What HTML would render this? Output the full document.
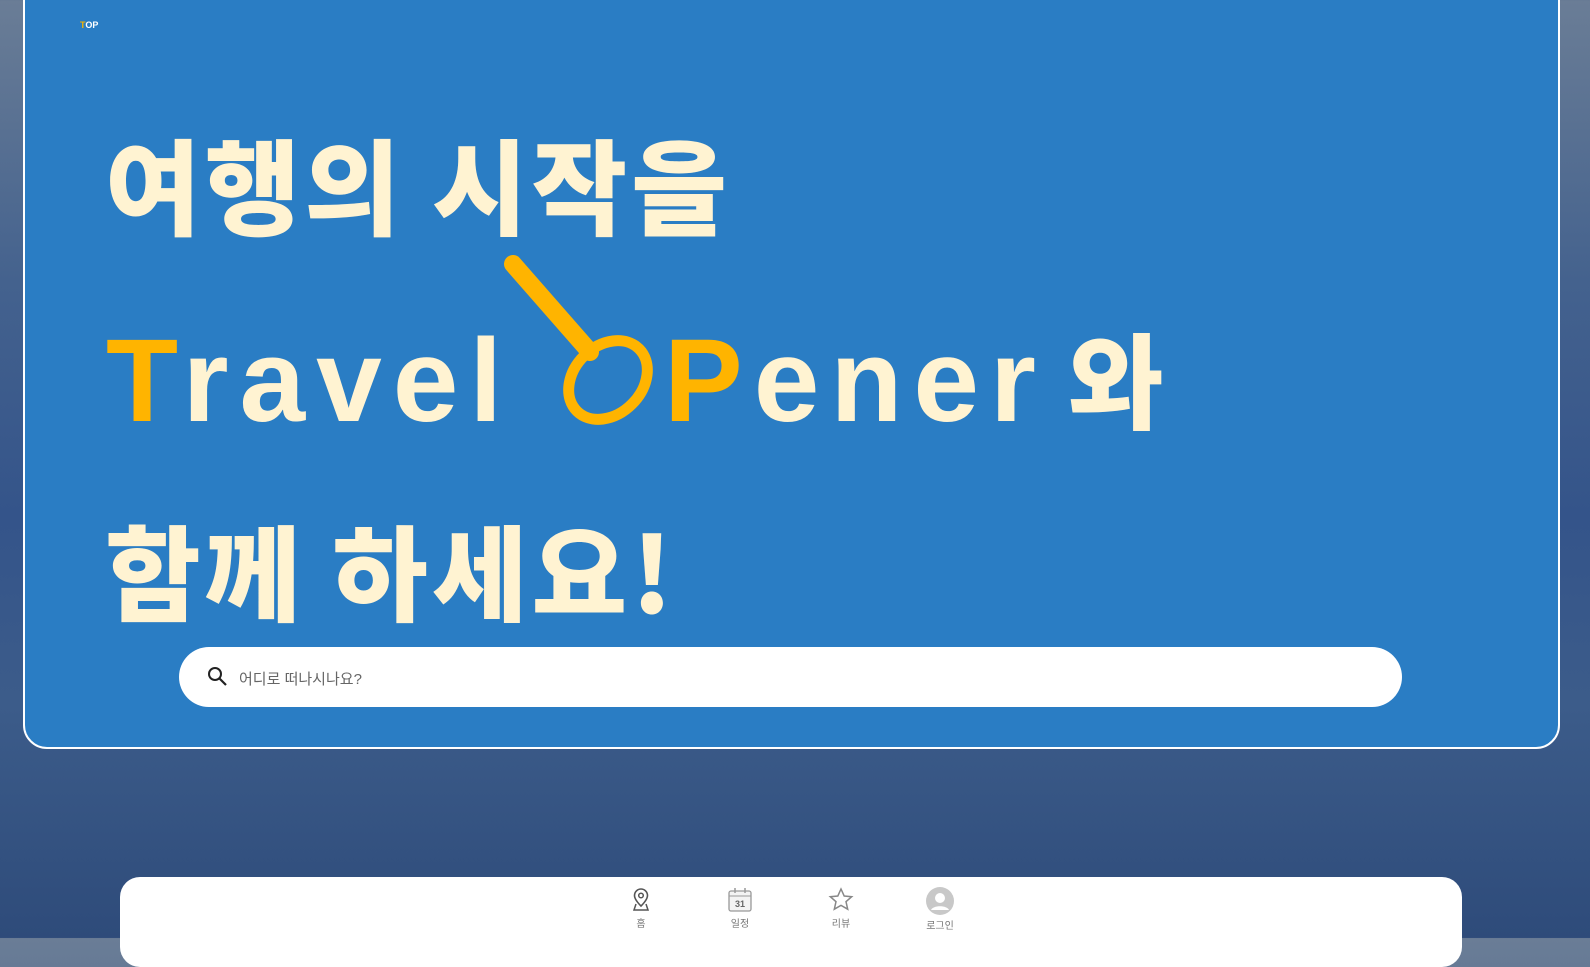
<!DOCTYPE html>
<html><head><meta charset="utf-8"><style>
*{margin:0;padding:0;box-sizing:border-box}
body{width:1590px;height:938px;overflow:hidden;position:relative;font-family:"Liberation Sans","Noto Sans CJK KR",sans-serif;
background:linear-gradient(180deg,#6a7d96 0%,#44628e 30%,#34548a 55%,#3c5c8a 75%,#2e4b7a 100%);}
.card{position:absolute;left:23px;top:-4px;width:1537px;height:753px;background:#2a7dc4;border:2px solid #fff;border-radius:0 0 24px 24px}
.top{position:absolute;left:55px;top:22px;font-size:9px;font-weight:900;color:#fff}
.top b{color:#f5b400}
.big{position:absolute;left:105px;color:#fff3d2;font-family:"Noto Sans CJK KR","Liberation Sans",sans-serif;font-weight:900;font-size:104px;line-height:1;white-space:nowrap;letter-spacing:4px}
.lat{position:absolute;color:#fff3d2;font-family:"Liberation Sans",sans-serif;font-weight:900;font-size:118px;line-height:1;white-space:nowrap;letter-spacing:11px}
.y{color:#ffb400}
.search{position:absolute;left:179px;top:647px;width:1223px;height:60px;background:#fff;border-radius:30px}
.search span{position:absolute;left:60px;top:21px;font-size:15px;color:#666}
.nav{position:absolute;left:120px;top:877px;width:1342px;height:90px;background:#fff;border-radius:20px}
.it{position:absolute;top:10px;width:60px;text-align:center;font-size:10px;color:#777}
.it svg{display:block;margin:0 auto 2px}
</style></head><body>
<div class="card">
<div class="top"><b>T</b>OP</div>
</div>
<div class="big" style="top:130px">여행의 시작을</div>
<div class="lat" style="left:106px;top:322px"><span class="y">T</span>ravel</div>
<svg style="position:absolute;left:480px;top:240px" width="200" height="200"><line x1="33" y1="24" x2="110" y2="112" stroke="#ffb400" stroke-width="18" stroke-linecap="round"/><ellipse cx="128" cy="140" rx="44" ry="34" transform="rotate(-45 128 140)" fill="none" stroke="#ffb400" stroke-width="11"/></svg>
<div class="lat" style="left:664px;top:322px"><span class="y">P</span>ener</div>
<div class="big" style="left:1068px;top:324px">와</div>
<div class="big" style="top:516px">함께 하세요!</div>
<div class="search"><svg style="position:absolute;left:28px;top:19px" width="22" height="22"><circle cx="8" cy="8" r="6" fill="none" stroke="#222" stroke-width="2"/><line x1="12.5" y1="12.5" x2="19" y2="19" stroke="#222" stroke-width="2.2"/></svg><span>어디로 떠나시나요?</span></div>
<div class="nav">
<div class="it" style="left:491px"><svg width="20" height="26" viewBox="0 0 20 26"><path d="M10 2a6.5 6.5 0 0 0-6.5 6.5C3.5 13 10 19 10 19s6.5-6 6.5-10.5A6.5 6.5 0 0 0 10 2z" fill="none" stroke="#555" stroke-width="1.6"/><circle cx="10" cy="8.5" r="2.3" fill="none" stroke="#555" stroke-width="1.5"/><path d="M5 17l-2 6h14l-2-6" fill="none" stroke="#555" stroke-width="1.5"/></svg>홈</div>
<div class="it" style="left:590px"><svg width="26" height="26" viewBox="0 0 26 26"><rect x="2" y="4" width="22" height="20" rx="2" fill="#f3f3f3" stroke="#999" stroke-width="1.3"/><line x1="2" y1="9" x2="24" y2="9" stroke="#999"/><line x1="8" y1="1" x2="8" y2="6" stroke="#999" stroke-width="1.5"/><line x1="18" y1="1" x2="18" y2="6" stroke="#999" stroke-width="1.5"/><text x="13" y="20" font-size="9" font-weight="bold" text-anchor="middle" fill="#666" font-family="Liberation Sans">31</text></svg>일정</div>
<div class="it" style="left:691px"><svg width="26" height="26" viewBox="0 0 26 26"><path d="M13 2l3.2 7 7.5.7-5.7 5 1.7 7.5L13 18.4 6.3 22.2 8 14.7l-5.7-5 7.5-.7z" fill="none" stroke="#888" stroke-width="1.5"/></svg>리뷰</div>
<div class="it" style="left:790px"><svg width="30" height="28" viewBox="0 0 30 28"><circle cx="15" cy="14" r="14" fill="#c8c8c8"/><circle cx="15" cy="11" r="5" fill="#fff"/><path d="M6 23c2-5 16-5 18 0" fill="#fff"/></svg>로그인</div>
</div>
</body></html>
